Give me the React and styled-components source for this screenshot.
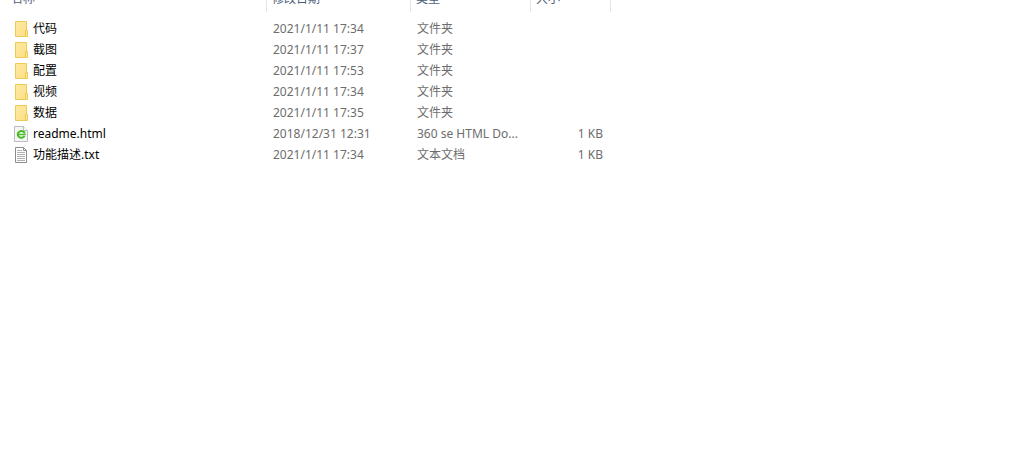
import React from "react";
import styled, { createGlobalStyle } from "styled-components";

const GlobalStyle = createGlobalStyle`
  body {
    margin: 0;
    background: #fff;
    font-family: "Noto Sans", "Noto Sans CJK SC", sans-serif;
    font-size: 12px;
    line-height: 20px;
  }
`;

const FileTable = styled.table`
  width: 100%;
  table-layout: fixed;
  border-collapse: collapse;
`;

const Column = styled.col`
  width: ${(p) => (p.$width ? `${p.$width}px` : "auto")};
`;

const HeaderCell = styled.th`
  padding: 0 0 6px;
  font-weight: 400;
  text-align: left;
`;

const HeaderLabel = styled.div`
  display: flex;
  align-items: flex-end;
  box-sizing: border-box;
  height: 12px;
  padding: 0 0 3px ${(p) => (p.$first ? 11 : 5)}px;
  overflow: hidden;
  border-right: 1px solid #e5e5e5;
  color: #4c607a;
`;

const Row = styled.tr`
  height: 21px;
`;

const Cell = styled.td`
  padding: 0 8px 0 6px;
  overflow: hidden;
  color: #6d6d6d;
  text-align: ${(p) => p.$align || "left"};
  text-overflow: ellipsis;
  white-space: nowrap;
`;

const NameCell = styled(Cell)`
  padding-left: 14px;
  color: #000;
`;

const FileName = styled.div`
  display: flex;
  align-items: center;
  gap: 5px;
`;

const Icon = styled.svg`
  flex: none;
  width: 14px;
  height: 16px;
`;

function FolderIcon() {
  return (
    <Icon viewBox="0 0 14 16" aria-hidden="true">
      <defs>
        <linearGradient id="folder" x1="0" y1="0" x2="1" y2="1">
          <stop offset="0" stopColor="#ffe9a2" />
          <stop offset="1" stopColor="#fbdf86" />
        </linearGradient>
      </defs>
      <path d="M1.5 .5h11v15h-11z" fill="url(#folder)" stroke="#ebcb55" />
      <path d="M11.5 9.5h2v6h-2z" fill="#ffe896" stroke="#ebcb55" />
    </Icon>
  );
}

function HtmlIcon() {
  return (
    <Icon viewBox="0 0 14 16" aria-hidden="true">
      <path d="M.5 .5h9l4 4v11h-13z" fill="#f6f6f6" stroke="#bcbcbc" />
      <path d="M9.5 .5v4h4" fill="#fff" stroke="#bcbcbc" />
      <path
        d="M10.6 9.9A3.6 3.4 0 1 1 10.8 7.4"
        fill="none"
        stroke="#46bd20"
        strokeWidth="2"
      />
      <path d="M4 8.5h7.8" stroke="#46bd20" strokeWidth="1.4" />
    </Icon>
  );
}

function TextIcon() {
  return (
    <Icon viewBox="0 0 14 16" aria-hidden="true">
      <path d="M1.5 .5h8l3 3v12h-11z" fill="#fff" stroke="#8c8c8c" />
      <path d="M9.5 .5v3h3" fill="none" stroke="#8c8c8c" />
      <path
        d="M3 3.5h5M3 5.5h8M3 7.5h8M3 9.5h8M3 11.5h8M3 13.5h8"
        stroke="#b0b0b0"
      />
    </Icon>
  );
}

const icons = { folder: FolderIcon, html: HtmlIcon, text: TextIcon };

const columns = [
  { label: "名称", width: 267 },
  { label: "修改日期", width: 144 },
  { label: "类型", width: 120 },
  { label: "大小", width: 80 },
];

const files = [
  { kind: "folder", name: "代码", date: "2021/1/11 17:34", type: "文件夹" },
  { kind: "folder", name: "截图", date: "2021/1/11 17:37", type: "文件夹" },
  { kind: "folder", name: "配置", date: "2021/1/11 17:53", type: "文件夹" },
  { kind: "folder", name: "视频", date: "2021/1/11 17:34", type: "文件夹" },
  { kind: "folder", name: "数据", date: "2021/1/11 17:35", type: "文件夹" },
  { kind: "html", name: "readme.html", date: "2018/12/31 12:31", type: "360 se HTML Do...", size: "1 KB" },
  { kind: "text", name: "功能描述.txt", date: "2021/1/11 17:34", type: "文本文档", size: "1 KB" },
];

function FileRow({ file }) {
  const FileIcon = icons[file.kind];
  return (
    <Row>
      <NameCell>
        <FileName>
          <FileIcon />
          {file.name}
        </FileName>
      </NameCell>
      <Cell>{file.date}</Cell>
      <Cell>{file.type}</Cell>
      <Cell $align="right">{file.size}</Cell>
      <Cell />
    </Row>
  );
}

export default function App() {
  return (
    <main lang="zh-CN">
      <GlobalStyle />
      <FileTable>
        <colgroup>
          {columns.map((c) => (
            <Column key={c.label} $width={c.width} />
          ))}
          <Column />
        </colgroup>
        <thead>
          <tr>
            {columns.map((c, i) => (
              <HeaderCell key={c.label} scope="col">
                <HeaderLabel $first={i === 0}>{c.label}</HeaderLabel>
              </HeaderCell>
            ))}
            <td />
          </tr>
        </thead>
        <tbody>
          {files.map((file) => (
            <FileRow key={file.name} file={file} />
          ))}
        </tbody>
      </FileTable>
    </main>
  );
}
